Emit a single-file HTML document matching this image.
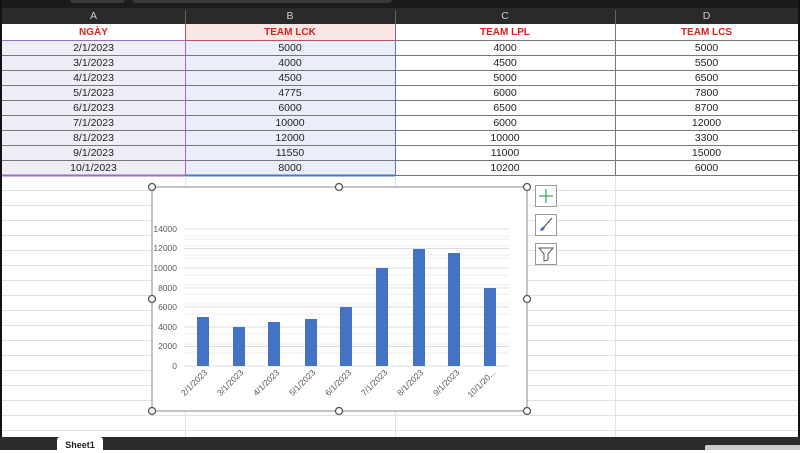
<!DOCTYPE html>
<html><head><meta charset="utf-8"><style>
body{margin:0;width:800px;height:450px;overflow:hidden;background:#fff;font-family:"Liberation Sans",sans-serif;position:relative}
.a{position:absolute}
.c{position:absolute;text-align:center;font-size:10.5px;line-height:15px;color:#222}
</style></head><body>
<div class="a" style="left:0;top:0;width:800px;height:8px;background:#1b1b1b"></div>
<div class="a" style="left:70px;top:0;width:55px;height:3px;background:#3a3a3a;border-radius:0 0 3px 3px"></div>
<div class="a" style="left:132px;top:0;width:260px;height:3px;background:#3a3a3a;border-radius:0 0 3px 3px"></div>
<div class="a" style="left:0;top:8px;width:800px;height:16px;background:#2a2a2a"></div>
<div class="c" style="left:2px;top:9px;width:183px;color:#ccc">A</div>
<div class="c" style="left:185px;top:9px;width:210px;color:#ccc">B</div>
<div class="c" style="left:395px;top:9px;width:220px;color:#ccc">C</div>
<div class="c" style="left:615px;top:9px;width:183px;color:#ccc">D</div>
<div class="a" style="left:185px;top:10px;width:1px;height:14px;background:#666"></div>
<div class="a" style="left:395px;top:10px;width:1px;height:14px;background:#666"></div>
<div class="a" style="left:615px;top:10px;width:1px;height:14px;background:#666"></div>
<div class="a" style="left:2px;top:40px;width:183px;height:136px;background:#efeef6"></div>
<div class="a" style="left:185px;top:24px;width:210px;height:16px;background:#fbe6e6"></div>
<div class="a" style="left:185px;top:40px;width:210px;height:136px;background:#e9eef8"></div>
<svg class="a" style="left:0;top:0" width="800" height="450">
<g stroke="#e2e2e2" stroke-width="1">
<line x1="2" y1="190.5" x2="798" y2="190.5"/><line x1="2" y1="205.5" x2="798" y2="205.5"/><line x1="2" y1="220.5" x2="798" y2="220.5"/><line x1="2" y1="235.5" x2="798" y2="235.5"/><line x1="2" y1="250.5" x2="798" y2="250.5"/><line x1="2" y1="265.5" x2="798" y2="265.5"/><line x1="2" y1="280.5" x2="798" y2="280.5"/><line x1="2" y1="295.5" x2="798" y2="295.5"/><line x1="2" y1="310.5" x2="798" y2="310.5"/><line x1="2" y1="325.5" x2="798" y2="325.5"/><line x1="2" y1="340.5" x2="798" y2="340.5"/><line x1="2" y1="355.5" x2="798" y2="355.5"/><line x1="2" y1="370.5" x2="798" y2="370.5"/><line x1="2" y1="385.5" x2="798" y2="385.5"/><line x1="2" y1="400.5" x2="798" y2="400.5"/><line x1="2" y1="415.5" x2="798" y2="415.5"/><line x1="2" y1="430.5" x2="798" y2="430.5"/>
<line x1="185.5" y1="176" x2="185.5" y2="437"/><line x1="395.5" y1="176" x2="395.5" y2="437"/><line x1="615.5" y1="176" x2="615.5" y2="437"/>
</g>
<g stroke="#777" stroke-width="1">
<line x1="2" y1="40.5" x2="798" y2="40.5"/>
<line x1="2" y1="55.5" x2="798" y2="55.5"/><line x1="2" y1="70.5" x2="798" y2="70.5"/><line x1="2" y1="85.5" x2="798" y2="85.5"/><line x1="2" y1="100.5" x2="798" y2="100.5"/><line x1="2" y1="115.5" x2="798" y2="115.5"/><line x1="2" y1="130.5" x2="798" y2="130.5"/><line x1="2" y1="145.5" x2="798" y2="145.5"/><line x1="2" y1="160.5" x2="798" y2="160.5"/><line x1="2" y1="175.5" x2="798" y2="175.5"/>
<line x1="395.5" y1="24" x2="395.5" y2="176"/><line x1="615.5" y1="24" x2="615.5" y2="176"/>
</g>
<line x1="185.5" y1="24" x2="185.5" y2="40" stroke="#c05060"/>
<line x1="185.5" y1="40" x2="185.5" y2="176" stroke="#9a6cc0"/>
<line x1="2" y1="40.5" x2="185" y2="40.5" stroke="#9a6cc0"/>
<line x1="186" y1="40.5" x2="395" y2="40.5" stroke="#c05060"/>
<line x1="2" y1="175.5" x2="185" y2="175.5" stroke="#9a6cc0" stroke-width="2"/>
<line x1="186" y1="175.5" x2="395" y2="175.5" stroke="#4a78c8" stroke-width="2"/>
<line x1="395.5" y1="40" x2="395.5" y2="176" stroke="#4a78c8"/>
</svg>
<div class="a" style="left:0;top:0;width:2px;height:450px;background:#111"></div>
<div class="a" style="left:798px;top:0;width:2px;height:450px;background:#111"></div>
<div class="c" style="left:2px;top:25px;width:183px;color:#e0201c;font-weight:bold;font-size:10px">NGÀY</div>
<div class="c" style="left:185px;top:25px;width:210px;color:#e0201c;font-weight:bold;font-size:10px">TEAM LCK</div>
<div class="c" style="left:395px;top:25px;width:220px;color:#e0201c;font-weight:bold;font-size:10px">TEAM LPL</div>
<div class="c" style="left:615px;top:25px;width:183px;color:#e0201c;font-weight:bold;font-size:10px">TEAM LCS</div>
<div class="c" style="left:2px;top:41px;width:183px">2/1/2023<br>3/1/2023<br>4/1/2023<br>5/1/2023<br>6/1/2023<br>7/1/2023<br>8/1/2023<br>9/1/2023<br>10/1/2023</div>
<div class="c" style="left:185px;top:41px;width:210px">5000<br>4000<br>4500<br>4775<br>6000<br>10000<br>12000<br>11550<br>8000</div>
<div class="c" style="left:395px;top:41px;width:220px">4000<br>4500<br>5000<br>6000<br>6500<br>6000<br>10000<br>11000<br>10200</div>
<div class="c" style="left:615px;top:41px;width:183px">5000<br>5500<br>6500<br>7800<br>8700<br>12000<br>3300<br>15000<br>6000</div>
<svg class="a" style="left:0;top:0" width="800" height="450" font-family="Liberation Sans" font-size="8.5" fill="#595959">
<rect x="152" y="187" width="375" height="224" fill="#fff" stroke="#888" stroke-width="1"/>
<g stroke="#ececec"><line x1="184" y1="236" x2="509" y2="236"/><line x1="184" y1="239" x2="509" y2="239"/><line x1="184" y1="246" x2="509" y2="246"/><line x1="184" y1="255" x2="509" y2="255"/><line x1="184" y1="258" x2="509" y2="258"/><line x1="184" y1="275" x2="509" y2="275"/><line x1="184" y1="285" x2="509" y2="285"/><line x1="184" y1="294" x2="509" y2="294"/><line x1="184" y1="304" x2="509" y2="304"/><line x1="184" y1="314" x2="509" y2="314"/><line x1="184" y1="334" x2="509" y2="334"/><line x1="184" y1="344" x2="509" y2="344"/><line x1="184" y1="353" x2="509" y2="353"/></g>
<g stroke="#dcdcdc"><line x1="184" y1="229" x2="509" y2="229"/><line x1="184" y1="248.5" x2="509" y2="248.5"/><line x1="184" y1="268" x2="509" y2="268"/><line x1="184" y1="288" x2="509" y2="288"/><line x1="184" y1="307" x2="509" y2="307"/><line x1="184" y1="327" x2="509" y2="327"/><line x1="184" y1="346.5" x2="509" y2="346.5"/><line x1="184" y1="366" x2="509" y2="366"/></g>
<g text-anchor="end"><text x="177" y="232">14000</text><text x="177" y="251">12000</text><text x="177" y="271">10000</text><text x="177" y="291">8000</text><text x="177" y="310">6000</text><text x="177" y="330">4000</text><text x="177" y="349">2000</text><text x="177" y="369">0</text></g>
<g fill="#4472c4"><rect x="197" y="317" width="12" height="49"/><rect x="233" y="327" width="12" height="39"/><rect x="268" y="322" width="12" height="44"/><rect x="305" y="319" width="12" height="47"/><rect x="340" y="307" width="12" height="59"/><rect x="376" y="268" width="12" height="98"/><rect x="413" y="249" width="12" height="117"/><rect x="448" y="253" width="12" height="113"/><rect x="484" y="288" width="12" height="78"/></g>
<g text-anchor="end">
<text transform="translate(208,373) rotate(-45)">2/1/2023</text><text transform="translate(244,373) rotate(-45)">3/1/2023</text><text transform="translate(280,373) rotate(-45)">4/1/2023</text><text transform="translate(316,373) rotate(-45)">5/1/2023</text><text transform="translate(352,373) rotate(-45)">6/1/2023</text><text transform="translate(388,373) rotate(-45)">7/1/2023</text><text transform="translate(424,373) rotate(-45)">8/1/2023</text><text transform="translate(460,373) rotate(-45)">9/1/2023</text><text transform="translate(496,373) rotate(-45)">10/1/20...</text></g>
<g fill="#fff" stroke="#555" stroke-width="1.3"><circle cx="152" cy="187" r="3.5"/><circle cx="339" cy="187" r="3.5"/><circle cx="527" cy="187" r="3.5"/><circle cx="152" cy="299" r="3.5"/><circle cx="527" cy="299" r="3.5"/><circle cx="152" cy="411" r="3.5"/><circle cx="339" cy="411" r="3.5"/><circle cx="527" cy="411" r="3.5"/></g>
<g fill="#fff" stroke="#999"><rect x="535.5" y="185.5" width="21" height="21"/><rect x="535.5" y="214.5" width="21" height="21"/><rect x="535.5" y="243.5" width="21" height="21"/></g>
<path d="M546 189v14M539 196h14" stroke="#3aa05a" stroke-width="1.2"/>
<path d="M552 218l-8 9" stroke="#555" stroke-width="1.2"/><path d="M540 231c1-4 3-5 5-4l-1 3z" fill="#4472c4"/>
<path d="M539 248h14l-5 6v6l-4 1v-7z" fill="none" stroke="#555"/>
</svg>
<div class="a" style="left:0;top:437px;width:800px;height:13px;background:#2b2b2b"></div>
<div class="a" style="left:57px;top:437px;width:46px;height:13px;background:#fff;border-radius:3px 3px 0 0;font-size:9px;font-weight:bold;color:#222;text-align:center;line-height:16px">Sheet1</div>
<div class="a" style="left:705px;top:445px;width:95px;height:5px;background:#ccc;border-radius:2px 0 0 0"></div>
</body></html>
